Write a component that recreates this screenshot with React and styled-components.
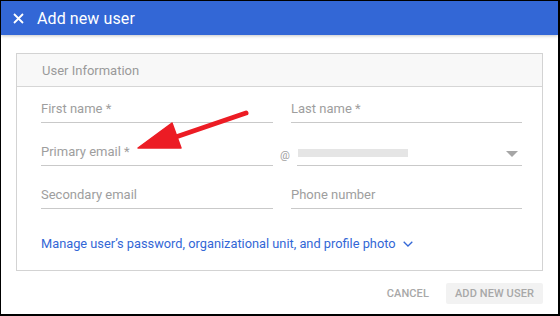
import React from 'react';
import styled, { createGlobalStyle } from 'styled-components';

const GlobalStyle = createGlobalStyle`
  html, body {
    margin: 0;
    padding: 0;
    background: #000;
  }
  body {
    font-family: Roboto, 'Liberation Sans', Arial, sans-serif;
  }
`;

const Frame = styled.div`
  position: relative;
  width: 557px;
  height: 313px;
  margin: 1px 0 0 1px;
  background: #fff;
  overflow: hidden;
`;

const Header = styled.div`
  display: flex;
  align-items: center;
  height: 34px;
  padding-left: 11px;
  background: #3367d6;
  box-shadow: 0 1px 3px rgba(0, 0, 0, 0.22);
  position: relative;
  z-index: 1;
`;

const CloseBtn = styled.button`
  display: flex;
  align-items: center;
  justify-content: center;
  width: 12px;
  height: 12px;
  padding: 0;
  border: 0;
  background: none;
  cursor: pointer;
`;

const Title = styled.h1`
  margin: 0 0 0 13px;
  font-size: 16px;
  font-weight: 400;
  color: #fff;
  letter-spacing: 0.1px;
`;

const Body = styled.div`
  padding: 18px 15px 0 15px;
`;

const Card = styled.section`
  border: 1px solid #d3d3d3;
  height: 218px;
  box-sizing: border-box;
`;

const CardHead = styled.div`
  display: flex;
  align-items: center;
  height: 32px;
  padding-left: 25px;
  background: #f8f8f8;
  border-bottom: 1px solid #d6d6d6;
  font-size: 13px;
  color: #9a9a9a;
`;

const CardBody = styled.div`
  display: flex;
  flex-direction: column;
  gap: 13px;
  padding: 6px 19px 0 24px;
`;

const Row = styled.div`
  display: flex;
  gap: ${p => p.$gap}px;
  height: 30px;
`;

const Field = styled.div`
  display: flex;
  align-items: flex-end;
  width: ${p => p.$w}px;
  padding-bottom: 6px;
  box-sizing: border-box;
  border-bottom: 1px solid #c9c9c9;
  font-size: 13px;
  line-height: 15px;
  color: #9e9e9e;
`;

const At = styled.div`
  display: flex;
  align-items: flex-end;
  justify-content: center;
  width: 24px;
  padding-bottom: 4px;
  box-sizing: border-box;
  font-size: 11px;
  color: #a0a0a0;
`;

const Select = styled(Field)`
  justify-content: space-between;
  padding-bottom: 8px;
  padding-right: 4px;
`;

const Blank = styled.div`
  width: 110px;
  height: 8px;
  background: #e5e5e5;
  margin-left: 1px;
`;

const ManageLink = styled.a`
  display: flex;
  align-items: center;
  gap: 7px;
  margin-top: 14px;
  font-size: 12.8px;
  color: #3367d6;
  text-decoration: none;
  cursor: pointer;
`;

const Footer = styled.div`
  display: flex;
  justify-content: flex-end;
  align-items: center;
  gap: 9px;
  padding-top: 12px;
`;

const FlatBtn = styled.button`
  height: 21px;
  padding: 0 ${p => p.$pad}px;
  border: 0;
  border-radius: 2px;
  background: ${p => p.$bg};
  font-family: Roboto, 'Liberation Sans', Arial, sans-serif;
  font-size: 11px;
  font-weight: 500;
  color: #a8a8a8;
  letter-spacing: 0.1px;
`;

const Overlay = styled.svg`
  position: absolute;
  left: 0;
  top: 0;
  pointer-events: none;
  z-index: 2;
`;

export default function App() {
  return (
    <Frame>
      <GlobalStyle />
      <Header>
        <CloseBtn aria-label="Close">
          <svg width="11" height="11" viewBox="0 0 11 11">
            <path d="M1 1L10 10M10 1L1 10" stroke="#fff" strokeWidth="1.8" />
          </svg>
        </CloseBtn>
        <Title>Add new user</Title>
      </Header>
      <Body>
        <Card>
          <CardHead>User Information</CardHead>
          <CardBody>
            <Row $gap={18}>
              <Field $w={232}>First name *</Field>
              <Field $w={231}>Last name *</Field>
            </Row>
            <Row $gap={0}>
              <Field $w={232}>Primary email *</Field>
              <At>@</At>
              <Select $w={225}>
                <Blank />
                <svg width="12" height="6" viewBox="0 0 12 6">
                  <path d="M0 0H12L6 6Z" fill="#a6a6a6" />
                </svg>
              </Select>
            </Row>
            <Row $gap={18}>
              <Field $w={232}>Secondary email</Field>
              <Field $w={231}>Phone number</Field>
            </Row>
            <ManageLink>
              Manage user’s password, organizational unit, and profile photo
              <svg width="10" height="6" viewBox="0 0 10 6">
                <path d="M0.7 0.7L5 5L9.3 0.7" stroke="#3367d6" strokeWidth="1.3" fill="none" />
              </svg>
            </ManageLink>
          </CardBody>
        </Card>
        <Footer>
          <FlatBtn $pad={8} $bg="transparent">CANCEL</FlatBtn>
          <FlatBtn $pad={9} $bg="#f2f2f2">ADD NEW USER</FlatBtn>
        </Footer>
      </Body>
      <Overlay width="557" height="313" viewBox="0 0 557 313">
        <path d="M245 112L166 139" stroke="#ec1c24" strokeWidth="5" strokeLinecap="round" />
        <path d="M137 147L171 122L180 147Z" fill="#ec1c24" stroke="#ec1c24" strokeWidth="1.5" strokeLinejoin="round" />
      </Overlay>
    </Frame>
  );
}
